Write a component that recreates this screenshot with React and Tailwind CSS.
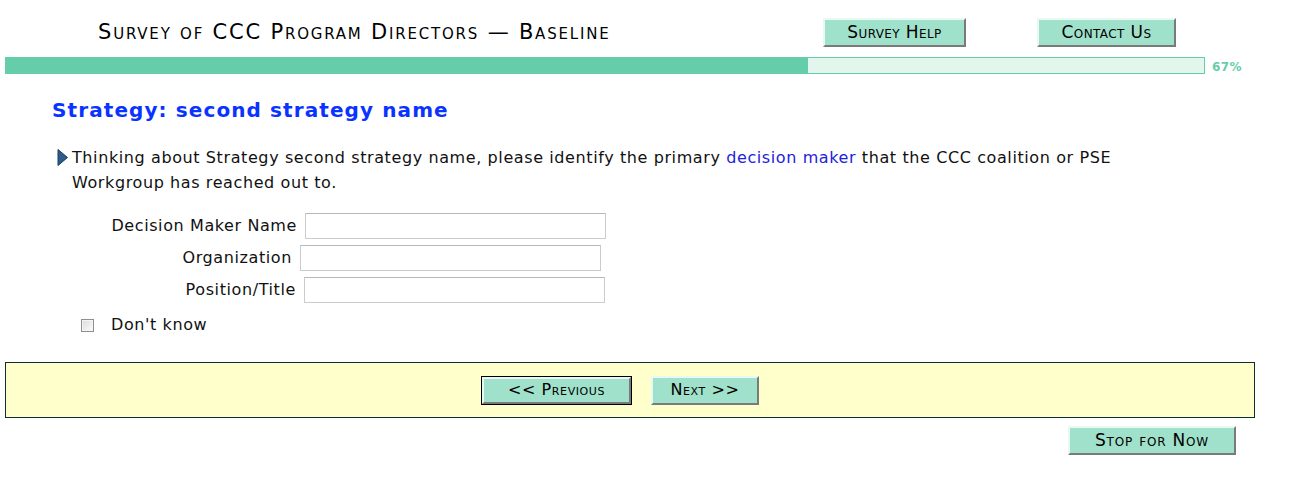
import React from 'react';

const font = { fontFamily: '"DejaVu Sans", Verdana, sans-serif' };

function Btn({ children, className = '' }) {
  return (
    <button
      type="button"
      className={`bg-[#a0e1cb] text-black [font-variant:small-caps] border-2 border-t-[#e8f8f2] border-l-[#e8f8f2] border-r-[#7a7a7a] border-b-[#7a7a7a] leading-none ${className}`}
    >
      {children}
    </button>
  );
}

function Field({ label, pad }) {
  return (
    <div className="flex items-center h-[26px]">
      <div className="text-right text-[16px] tracking-[0.6px] text-[#111]" style={{ width: pad }}>{label}</div>
      <input
        type="text"
        className="ml-[8px] h-[26px] w-[301px] border border-[#c9ccd1] border-t-[#b5b8bd] bg-white outline-none"
      />
    </div>
  );
}

export default function App() {
  return (
    <div className="w-[1303px] h-[491px] bg-white text-black" style={font}>
      {/* header */}
      <div className="flex items-center pt-[18px] h-[47px]">
        <div className="w-[823px] pl-[98px] text-[21px] [font-variant:small-caps] tracking-[1.8px] leading-none pb-[1px]">
          Survey of CCC Program Directors — Baseline
        </div>
        <Btn className="w-[143px] h-[29px] text-[17px] tracking-[0.4px]">Survey Help</Btn>
        <Btn className="ml-[71px] w-[139px] h-[29px] text-[17px] tracking-[0.4px]">Contact Us</Btn>
      </div>

      {/* progress */}
      <div className="flex items-center mt-[10px] ml-[5px] h-[17px]">
        <div className="w-[1200px] h-[17px] border border-[#66cdaa] bg-[#e2f6ee] flex">
          <div className="h-full w-[802px] bg-[#66cdaa]" />
        </div>
        <div className="ml-[7px] text-[12px] font-bold text-[#66cdaa] pt-[2px] tracking-[0.4px]">67%</div>
      </div>

      {/* heading */}
      <h1 className="ml-[52px] mt-[23px] text-[20px] font-bold text-[#0a33ff] leading-[26px] tracking-[1.1px]">
        Strategy: second strategy name
      </h1>

      {/* question */}
      <div className="flex mt-[22px] ml-[57px]">
        <svg width="11" height="17" viewBox="0 0 11 17" className="mt-[4px] shrink-0">
          <polygon points="1,0.5 10.5,8.5 1,16.5" fill="#2e5b8a" stroke="#1c3c5e" strokeWidth="1" />
        </svg>
        <p className="ml-[4px] w-[1080px] text-[16px] leading-[25px] tracking-[0.6px] text-[#111]">
          Thinking about Strategy second strategy name, please identify the primary{' '}
          <span className="text-[#2222dd]">decision maker</span> that the CCC coalition or PSE
          Workgroup has reached out to.
        </p>
      </div>

      {/* fields */}
      <div className="mt-[18px] flex flex-col gap-[6px]">
        <Field label="Decision Maker Name" pad="297px" />
        <Field label="Organization" pad="292px" />
        <Field label="Position/Title" pad="296px" />
      </div>

      <label className="flex items-center mt-[10px] h-[24px] ml-[81px] text-[16px] tracking-[0.6px] text-[#111]">
        <span className="w-[13px] h-[13px] border border-[#8f8f8f] bg-gradient-to-br from-[#dcdcdc] to-[#fbfbfb] shadow-[inset_0_0_0_1px_#f4f4f4]" />
        <span className="ml-[17px]">Don't know</span>
      </label>

      {/* nav box */}
      <div className="mt-[25px] ml-[5px] w-[1250px] h-[56px] border border-[#0f3030] bg-[#ffffcc] flex items-center justify-center">
        <div className="flex items-center gap-[19px] ml-[-20px]">
          <div className="border border-black">
            <Btn className="w-[149px] h-[27px] text-[16px] tracking-[0.6px]">&lt;&lt; Previous</Btn>
          </div>
          <Btn className="w-[108px] h-[29px] text-[16px] tracking-[0.6px]">Next &gt;&gt;</Btn>
        </div>
      </div>

      <div className="flex justify-end w-[1236px] mt-[8px]">
        <Btn className="w-[168px] h-[29px] text-[17px] tracking-[0.8px]">Stop for Now</Btn>
      </div>
    </div>
  );
}
